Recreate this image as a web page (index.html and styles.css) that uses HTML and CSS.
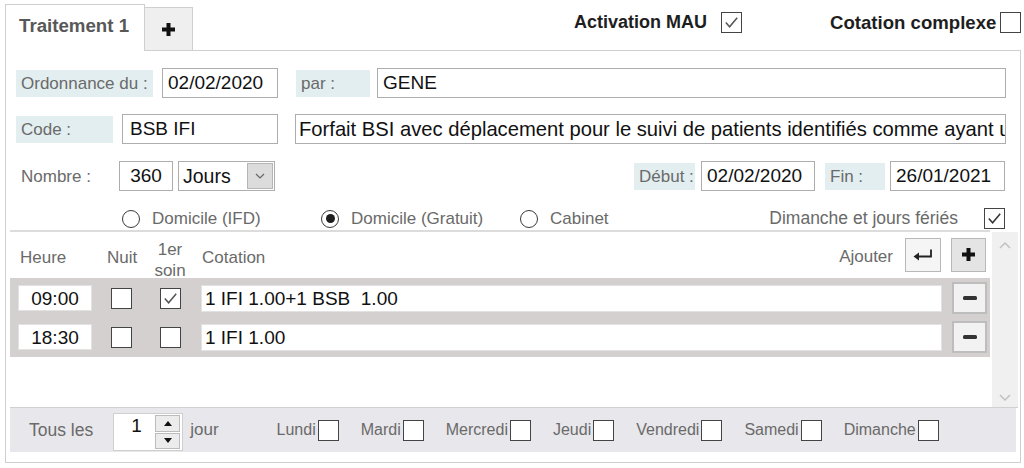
FILE: index.html
```html
<!DOCTYPE html>
<html lang="fr">
<head>
<meta charset="utf-8">
<title>Traitement</title>
<link rel="stylesheet" href="styles.css">
</head>
<body>
<div class="top">
  <div class="tab tab-main">Traitement 1</div>
  <div class="tab tab-add">
    <svg class="plus-ico" viewBox="0 0 13 13" width="13" height="13"><path d="M4.5 0h4v4.5h4.5v4h-4.5v4.5h-4v-4.5h-4.5v-4h4.5z" fill="#111"/></svg>
  </div>
  <div class="tab-fill">
    <span class="hdr">Activation MAU</span>
    <span class="cb hdr-cb1"><svg viewBox="0 0 20 20"><polyline points="4,10 8,14.5 16,5" fill="none" stroke="#555" stroke-width="1.6"/></svg></span>
    <span class="hdr hdr2">Cotation complexe</span>
    <span class="cb hdr-cb2"></span>
  </div>
</div>

<div class="panel">
  <div class="frow">
    <span class="lbl lbl-ord">Ordonnance du :</span>
    <span class="inp inp-date1">02/02/2020</span>
    <span class="lbl lbl-par">par :</span>
    <span class="inp inp-grow inp-par">GENE</span>
  </div>
  <div class="frow frow2">
    <span class="lbl lbl-code">Code :</span>
    <span class="inp inp-code">BSB IFI</span>
    <span class="inp inp-grow inp-desc">Forfait BSI avec déplacement pour le suivi de patients identifiés comme ayant un niveau de dépendance</span>
  </div>
  <div class="frow frow3">
    <span class="lbl lbl-nb">Nombre :</span>
    <span class="inp inp-nb">360</span>
    <span class="sel">
      <span class="sel-text">Jours</span>
      <span class="sel-btn"><svg viewBox="0 0 10 6" width="10" height="6"><polyline points="1,1 5,5 9,1" fill="none" stroke="#666" stroke-width="1.2"/></svg></span>
    </span>
    <span class="lbl lbl-deb">Début :</span>
    <span class="inp inp-deb">02/02/2020</span>
    <span class="lbl lbl-fin">Fin :</span>
    <span class="inp inp-fin">26/01/2021</span>
  </div>

  <div class="radios">
    <span class="rgroup"><span class="radio"></span>Domicile (IFD)</span>
    <span class="rgroup"><span class="radio on"></span>Domicile (Gratuit)</span>
    <span class="rgroup"><span class="radio"></span>Cabinet</span>
    <span class="dim">Dimanche et jours fériés</span>
    <span class="cb dim-cb"><svg viewBox="0 0 20 20"><polyline points="4,10 8,14.5 16,5" fill="none" stroke="#333" stroke-width="1.6"/></svg></span>
  </div>

  <div class="list">
    <div class="list-main">
      <div class="lhead">
        <span class="col-h">Heure</span>
        <span class="col-n">Nuit</span>
        <span class="col-s">1er<br>soin</span>
        <span class="col-c">Cotation</span>
        <span class="ajouter">Ajouter</span>
        <span class="btn btn-enter"><svg viewBox="0 0 20 12" width="20" height="12"><path d="M18 0.5V7.5H5" fill="none" stroke="#222" stroke-width="1.8"/><polygon points="0.5,7.5 6,3.5 6,11.5" fill="#222"/></svg></span>
        <span class="btn btn-plus"><svg viewBox="0 0 13 13" width="13" height="13"><path d="M4.5 0h4v4.5h4.5v4h-4.5v4.5h-4v-4.5h-4.5v-4h4.5z" fill="#111"/></svg></span>
      </div>
      <div class="rows">
        <div class="row">
          <span class="time">09:00</span>
          <span class="cb cb-n"></span>
          <span class="cb cb-s"><svg viewBox="0 0 20 20"><polyline points="4,10 8,14.5 16,5" fill="none" stroke="#555" stroke-width="1.6"/></svg></span>
          <span class="cot">1 IFI 1.00+1 BSB&nbsp; 1.00</span>
          <span class="btn btn-minus"><span class="bar"></span></span>
        </div>
        <div class="row">
          <span class="time">18:30</span>
          <span class="cb cb-n"></span>
          <span class="cb cb-s"></span>
          <span class="cot">1 IFI 1.00</span>
          <span class="btn btn-minus"><span class="bar"></span></span>
        </div>
      </div>
    </div>
    <div class="scroll">
      <svg viewBox="0 0 12 7" width="12" height="7"><polyline points="1,6 6,1 11,6" fill="none" stroke="#c2c2c2" stroke-width="1.5"/></svg>
      <svg viewBox="0 0 12 7" width="12" height="7"><polyline points="1,1 6,6 11,1" fill="none" stroke="#c2c2c2" stroke-width="1.5"/></svg>
    </div>
  </div>

  <div class="bottom">
    <span class="tous">Tous les</span>
    <span class="spin">
      <span class="spin-val">1</span>
      <span class="spin-btns">
        <span class="spin-b"><svg viewBox="0 0 8 5" width="8" height="5"><polygon points="0,5 4,0 8,5" fill="#111"/></svg></span>
        <span class="spin-b"><svg viewBox="0 0 8 5" width="8" height="5"><polygon points="0,0 8,0 4,5" fill="#111"/></svg></span>
      </span>
    </span>
    <span class="jour">jour</span>
    <div class="days">
      <span class="day">Lundi<span class="cb"></span></span>
      <span class="day">Mardi<span class="cb"></span></span>
      <span class="day">Mercredi<span class="cb"></span></span>
      <span class="day">Jeudi<span class="cb"></span></span>
      <span class="day">Vendredi<span class="cb"></span></span>
      <span class="day">Samedi<span class="cb"></span></span>
      <span class="day">Dimanche<span class="cb"></span></span>
    </div>
  </div>
</div>
</body>
</html>
```

FILE: styles.css
```css
* { box-sizing: border-box; }
html, body { margin: 0; padding: 0; background: #fff; }
body {
  font-family: "Liberation Sans", Arial, sans-serif;
  font-size: 17px;
  color: #6a6a6a;
  width: 1024px;
  height: 468px;
  overflow: hidden;
}

/* ---------- top tabs ---------- */
.top { display: flex; height: 51px; width: 1021px; }
.tab { border: 1px solid #cfcfcf; border-bottom: none; }
.tab-main {
  margin-left: 5px;
  margin-top: 4px;
  width: 140px;
  height: 47px;
  background: #fff;
  font-weight: bold;
  font-size: 18.7px;
  line-height: 20px;
  color: #585858;
  padding: 11px 0 0 13px;
  white-space: nowrap;
}
.tab-add {
  margin-top: 7px;
  width: 48px;
  height: 44px;
  border-left: none;
  border-bottom: 1px solid #cfcfcf;
  background: #efefef;
  display: flex;
  align-items: center;
  justify-content: center;
}
.tab-fill {
  flex: 1;
  height: 51px;
  border-bottom: 1px solid #cfcfcf;
  display: flex;
  align-items: flex-start;
  padding: 12px 0 0 381px;
  overflow: hidden;
}
.hdr { font-weight: bold; font-size: 18px; line-height: 21px; color: #1e1e1e; white-space: nowrap; }
.hdr-cb1 { margin-left: 14px; }
.hdr2 { margin-left: 88px; font-size: 18.6px; }
.hdr-cb2 { margin-left: 4px; flex-shrink: 0; }

/* ---------- checkbox ---------- */
.cb {
  width: 21px;
  height: 21px;
  border: 1.5px solid #444;
  background: #fff;
  display: inline-flex;
  flex-shrink: 0;
}
.cb svg { width: 100%; height: 100%; }

/* ---------- panel ---------- */
.panel {
  margin-left: 5px;
  width: 1016px;
  height: 412px;
  border: 1px solid #cfcfcf;
  border-top: none;
  padding-top: 17px;
}
.frow { display: flex; align-items: center; height: 30px; padding: 0 14px 0 10px; }
.frow2 { margin-top: 16px; }
.frow3 { margin-top: 17px; }
.lbl {
  height: 27px;
  line-height: 27px;
  padding-left: 5px;
  background: #e3eef0;
  white-space: nowrap;
  flex-shrink: 0;
}
.inp {
  height: 30px;
  line-height: 28px;
  border: 1px solid #adadad;
  background: #fff;
  color: #111;
  font-size: 19px;
  padding-left: 5px;
  white-space: nowrap;
  overflow: hidden;
  flex-shrink: 0;
}
.inp-grow { flex: 1; flex-shrink: 1; min-width: 0; }
.lbl-ord { width: 137px; }
.inp-date1 { margin-left: 9px; width: 116px; }
.lbl-par { margin-left: 18px; width: 74px; }
.inp-par { margin-left: 7px; }
.lbl-code { width: 97px; }
.inp-code { margin-left: 9px; width: 156px; padding-left: 7px; }
.inp-desc { margin-left: 17px; padding-left: 3px; font-size: 20.2px; }
.lbl-nb { width: 103px; background: transparent; }
.inp-nb { width: 54px; text-align: center; padding-left: 0; }
.sel {
  margin-left: 5px;
  width: 97px;
  height: 30px;
  border: 1px solid #adadad;
  background: #fff;
  display: flex;
  flex-shrink: 0;
}
.sel-text { flex: 1; color: #111; font-size: 19.5px; line-height: 28px; padding-left: 4px; }
.sel-btn {
  width: 26px;
  margin: 1px;
  background: #dcdcdc;
  border: 1px solid #b5b5b5;
  display: flex;
  align-items: center;
  justify-content: center;
}
.lbl-deb { margin-left: auto; width: 61px; }
.inp-deb { margin-left: 6px; width: 114px; }
.lbl-fin { margin-left: 10px; width: 60px; }
.inp-fin { margin-left: 5px; width: 115px; margin-right: 1px; }

/* ---------- radios ---------- */
.radios {
  display: flex;
  align-items: center;
  height: 23px;
  margin-top: 16px;
  padding: 0 15px 0 116px;
}
.rgroup { display: flex; align-items: center; width: 199px; white-space: nowrap; }
.rgroup:nth-child(3) { width: auto; }
.radio {
  width: 18px;
  height: 18px;
  border: 1.5px solid #3a3a3a;
  border-radius: 50%;
  margin-right: 12px;
  background: #fff;
  display: inline-flex;
  align-items: center;
  justify-content: center;
}
.radio.on::after {
  content: "";
  width: 9px;
  height: 9px;
  border-radius: 50%;
  background: #1e1e1e;
}
.dim { margin-left: auto; white-space: nowrap; font-size: 17.5px; }
.dim-cb { margin-left: 26px; }

/* ---------- list ---------- */
.list {
  display: flex;
  margin-left: 4px;
  width: 1008px;
  height: 178px;
  border-bottom: 1px solid #d0d0d0;
}
.list-main { width: 980px; border-top: 2px solid #dcdcdc; }
.scroll {
  width: 26px;
  margin-left: 2px;
  margin-top: 2px;
  background: #f0f0f0;
  display: flex;
  flex-direction: column;
  justify-content: space-between;
  align-items: center;
  padding: 10px 0 6px;
}
.lhead {
  display: flex;
  align-items: center;
  height: 46px;
  padding: 0 4px 0 10px;
}
.col-h { width: 87px; padding-top: 6px; }
.col-n { width: 45px; padding-top: 6px; }
.col-s { width: 36px; text-align: center; line-height: 21px; margin-top: 10px; }
.col-c { margin-left: 14px; padding-top: 6px; }
.ajouter { margin-left: auto; margin-right: 12px; padding-top: 4px; }
.btn {
  display: flex;
  align-items: center;
  justify-content: center;
  flex-shrink: 0;
}
.btn-enter { width: 36px; height: 34px; background: #f5f5f5; border: 1.5px solid #b8b8b8; margin-top: -1px; }
.btn-plus { margin-left: 10px; width: 35px; height: 34px; background: #e4e4e4; border: 1.5px solid #b8b8b8; margin-top: -1px; }

.rows {
  background: #d4d0cf;
  padding: 4px 3px 4px 8px;
  display: flex;
  flex-direction: column;
  gap: 7px;
}
.row { display: flex; align-items: center; height: 32px; }
.time {
  width: 74px;
  height: 26px;
  line-height: 25px;
  background: #fff;
  border: 1px solid #e2e2e2;
  text-align: center;
  font-size: 19px;
  color: #111;
}
.cb-n { margin-left: 19px; }
.cb-s { margin-left: 28px; }
.cot {
  margin-left: 20px;
  flex: 1;
  height: 27px;
  line-height: 26px;
  background: #fff;
  border: 1px solid #e2e2e2;
  padding-left: 3px;
  font-size: 19px;
  color: #111;
  white-space: nowrap;
}
.btn-minus {
  margin-left: 10px;
  width: 35px;
  height: 32px;
  background: #f2f2f2;
  border: 2px solid #bdbdbd;
}
.bar { width: 14px; height: 4px; border-radius: 1.5px; background: #333; }

/* ---------- bottom ---------- */
.bottom {
  margin-left: 4px;
  width: 1006px;
  height: 44px;
  background: #e8e7eb;
  display: flex;
  align-items: center;
  padding-left: 19px;
}
.tous { white-space: nowrap; font-size: 17.5px; }
.spin {
  margin-left: 20px;
  margin-top: 4px;
  width: 70px;
  height: 38px;
  background: #fff;
  border: 1px solid #cfcfcf;
  display: flex;
  padding: 1px 2px 1px 1px;
}
.spin-val { flex: 1; color: #111; font-size: 19px; line-height: 22px; padding-left: 16px; }
.spin-btns { width: 25px; display: flex; flex-direction: column; gap: 1px; }
.spin-b {
  flex: 1;
  background: #ececec;
  border: 1px solid #bcbcbc;
  display: flex;
  align-items: center;
  justify-content: center;
}
.jour { margin-left: 7px; }
.days { margin-left: 58px; display: flex; gap: 22px; font-size: 16px; }
.day { display: flex; align-items: center; white-space: nowrap; }
.day .cb { margin-left: 2px; }
```
